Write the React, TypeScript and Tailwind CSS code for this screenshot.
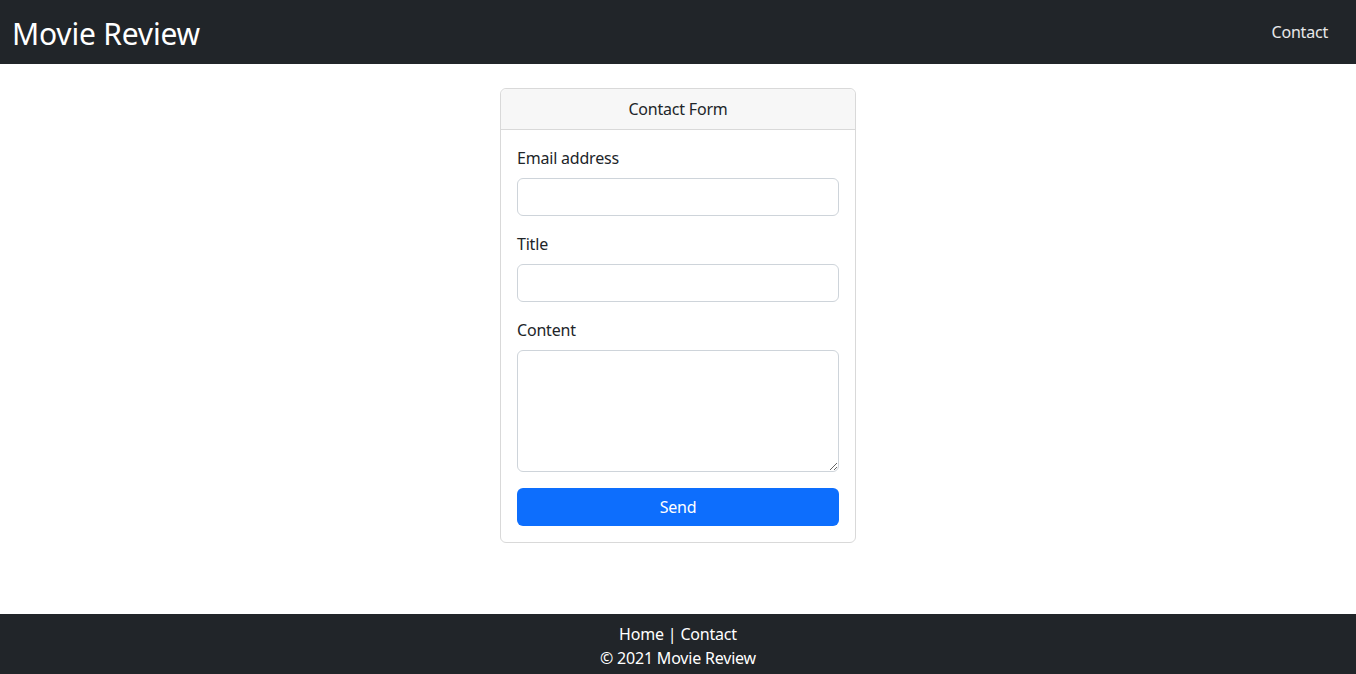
export default function App() {
  return (
    <div className="flex min-h-screen flex-col bg-white text-[#212529] font-['Noto_Sans',sans-serif]">
      <nav className="flex h-16 items-center justify-between bg-[#212529] px-3">
        <a href="#" className="mt-1 text-[30px] leading-none tracking-[-0.2px] text-white">
          Movie Review
        </a>
        <a href="#" className="px-4 text-base tracking-[-0.2px] text-white/90">
          Contact
        </a>
      </nav>

      <main className="flex flex-1 justify-center pt-6">
        <div className="h-fit w-[356px] rounded-md border border-[#d9d9d9]">
          <div className="rounded-t-md border-b border-[#d9d9d9] bg-[#f7f7f7] py-2 text-center text-base leading-6 tracking-[-0.2px]">
            Contact Form
          </div>
          <form className="p-4 tracking-[-0.2px]" onSubmit={(e) => e.preventDefault()}>
            <div className="mb-4">
              <label className="mb-2 block text-base leading-6">Email address</label>
              <input
                type="email"
                className="block h-[38px] w-full rounded-md border border-[#ced4da] px-3 outline-none"
              />
            </div>
            <div className="mb-4">
              <label className="mb-2 block text-base leading-6">Title</label>
              <input
                type="text"
                className="block h-[38px] w-full rounded-md border border-[#ced4da] px-3 outline-none"
              />
            </div>
            <div className="mb-4">
              <label className="mb-2 block text-base leading-6">Content</label>
              <textarea className="block h-[122px] w-full rounded-md border border-[#ced4da] px-3 py-1.5 outline-none" />
            </div>
            <button
              type="submit"
              className="block h-[38px] w-full rounded-md bg-[#0d6efd] text-base text-white"
            >
              Send
            </button>
          </form>
        </div>
      </main>

      <footer className="bg-[#212529] pb-1 pt-2 text-center text-base leading-6 tracking-[-0.2px] text-white">
        <div>
          <a href="#">Home</a> | <a href="#">Contact</a>
        </div>
        <div>© 2021 Movie Review</div>
      </footer>
    </div>
  );
}
